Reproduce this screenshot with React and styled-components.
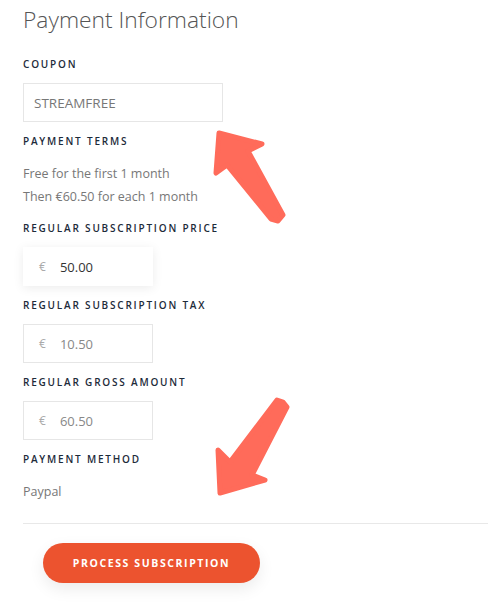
import React from "react";
import styled, { createGlobalStyle } from "styled-components";

const Global = createGlobalStyle`
  html, body { margin: 0; padding: 0; background: #fff; }
  body { font-family: "Open Sans", "Liberation Sans", sans-serif; }
  * { box-sizing: border-box; }
`;

const Page = styled.div`
  position: relative;
  width: 488px;
  height: 613px;
  overflow: hidden;
  padding: 8px 0 0 23px;
`;

const Title = styled.h2`
  margin: 0;
  font-family: "Open Sans", sans-serif;
  font-weight: 300;
  font-size: 22.8px;
  line-height: 24px;
  color: #555;
`;

const Label = styled.div`
  font-family: "Open Sans", sans-serif;
  font-weight: 600;
  font-size: 10px;
  letter-spacing: 1.8px;
  text-transform: uppercase;
  color: #1d2b3a;
  line-height: 14px;
  margin-top: ${(p) => p.$mt || 0}px;
`;

const TextInput = styled.div`
  width: 200px;
  height: 39px;
  margin-top: 12px;
  border: 1px solid #e6e6e6;
  display: flex;
  align-items: center;
  padding-left: 10px;
  font-family: "Open Sans", sans-serif;
  font-size: 13.5px;
  color: #777;
`;

const MoneyInput = styled.div`
  width: 130px;
  height: 39px;
  margin-top: 12px;
  border: 1px solid ${(p) => (p.$focus ? "transparent" : "#e6e6e6")};
  box-shadow: ${(p) => (p.$focus ? "0 2px 10px rgba(0,0,0,0.08)" : "none")};
  display: flex;
  align-items: center;
  padding-left: 15px;
  gap: 14px;
  font-family: "Open Sans", sans-serif;
  font-size: 13px;
  color: ${(p) => (p.$focus ? "#333" : "#888")};
`;

const Currency = styled.span`
  color: #aaa;
  font-size: 12px;
`;

const Body = styled.p`
  margin: 0;
  margin-top: ${(p) => p.$mt || 0}px;
  font-family: "Open Sans", sans-serif;
  font-weight: 400;
  font-size: 12.5px;
  line-height: 23px;
  color: #777;
`;

const Divider = styled.hr`
  margin: 20px 0 0;
  border: none;
  border-top: 1px solid #e8e8e8;
  width: 465px;
`;

const Button = styled.button`
  margin: 19px 0 0 20px;
  width: 217px;
  height: 40px;
  border: none;
  border-radius: 20px;
  background: #ec532f;
  color: #fff;
  font-family: "Open Sans", sans-serif;
  font-weight: 700;
  font-size: 10.5px;
  letter-spacing: 1.6px;
  text-transform: uppercase;
  box-shadow: 0 6px 16px rgba(0,0,0,0.08);
  cursor: pointer;
`;

const Overlay = styled.svg`
  position: absolute;
  left: 0;
  top: 0;
  pointer-events: none;
`;

export default function App() {
  return (
    <Page>
      <Global />
      <Title>Payment Information</Title>
      <Label $mt={25}>Coupon</Label>
      <TextInput>STREAMFREE</TextInput>
      <Label $mt={12}>Payment Terms</Label>
      <Body $mt={14}>Free for the first 1 month</Body>
      <Body>Then €60.50 for each 1 month</Body>
      <Label $mt={13}>Regular Subscription Price</Label>
      <MoneyInput $focus>
        <Currency>€</Currency>50.00
      </MoneyInput>
      <Label $mt={12}>Regular Subscription Tax</Label>
      <MoneyInput>
        <Currency>€</Currency>10.50
      </MoneyInput>
      <Label $mt={12}>Regular Gross Amount</Label>
      <MoneyInput>
        <Currency>€</Currency>60.50
      </MoneyInput>
      <Label $mt={12}>Payment Method</Label>
      <Body $mt={14}>Paypal</Body>
      <Divider />
      <Button>Process Subscription</Button>
      <Overlay width="488" height="613" viewBox="0 0 488 613">
        <path
          d="M219 133 L262 144 L248 151 L283 215 L278 221 L271 219 L227 165 L216 173 Z"
          fill="#ff6b5a"
          stroke="#ff6b5a"
          strokeWidth="5"
          strokeLinejoin="round"
        />
        <path
          d="M283 402 L287 407 L252 475 L265 480 L220 493 L218 450 L230 462 L277 400 Z"
          fill="#ff6b5a"
          stroke="#ff6b5a"
          strokeWidth="5"
          strokeLinejoin="round"
        />
      </Overlay>
    </Page>
  );
}
